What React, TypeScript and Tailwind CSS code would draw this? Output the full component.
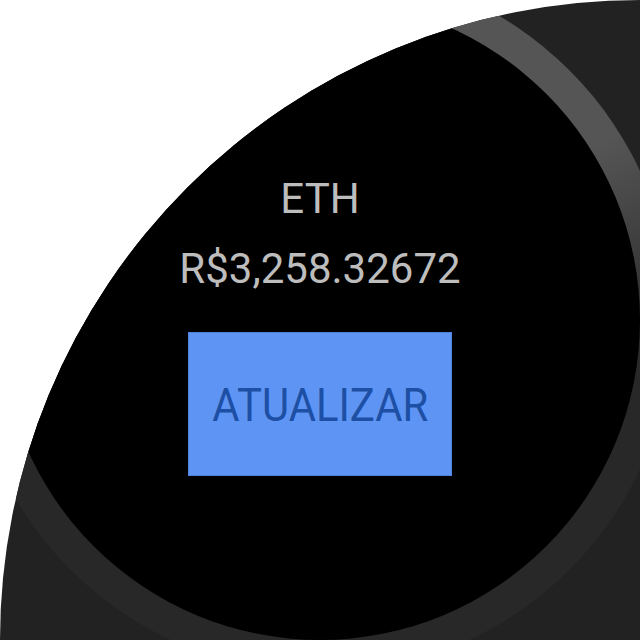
import React from "react";

const ROBOTO = { fontFamily: "Roboto, 'Noto Sans', sans-serif" };

export default function App() {
  return (
    <div className="flex h-[640px] w-[640px] bg-white">
      {/* watch frame, clipped by the big rounded corner of the emulator */}
      <div className="relative h-[640px] w-[640px] overflow-hidden rounded-tl-[640px] bg-[#222222]">
        <div className="absolute left-[-33px] top-[-33px] h-[706px] w-[706px] rounded-full bg-[conic-gradient(from_0deg,#3a3a3a_0deg,#555555_18deg,#555555_58deg,#3a3a3a_80deg,#282828_100deg,#282828_340deg,#3a3a3a_360deg)]" />
        <div
          className="absolute left-0 top-0 flex h-[640px] w-[640px] flex-col items-center rounded-full bg-black pt-[178px]"
          style={ROBOTO}
        >
          <div className="text-[42px] leading-[42px] text-[#bdbdbd]">ETH</div>
          <div className="mt-[28px] text-[42px] leading-[42px] text-[#bdbdbd]">R$3,258.32672</div>
          <button className="mt-[42px] flex h-[144px] w-[264px] items-center justify-center border border-[#4d84e2] bg-[#5e95f4] text-[#1d4fa5]">
            <span className="inline-block scale-x-[0.89] text-[47px] leading-none">ATUALIZAR</span>
          </button>
        </div>
      </div>
    </div>
  );
}
